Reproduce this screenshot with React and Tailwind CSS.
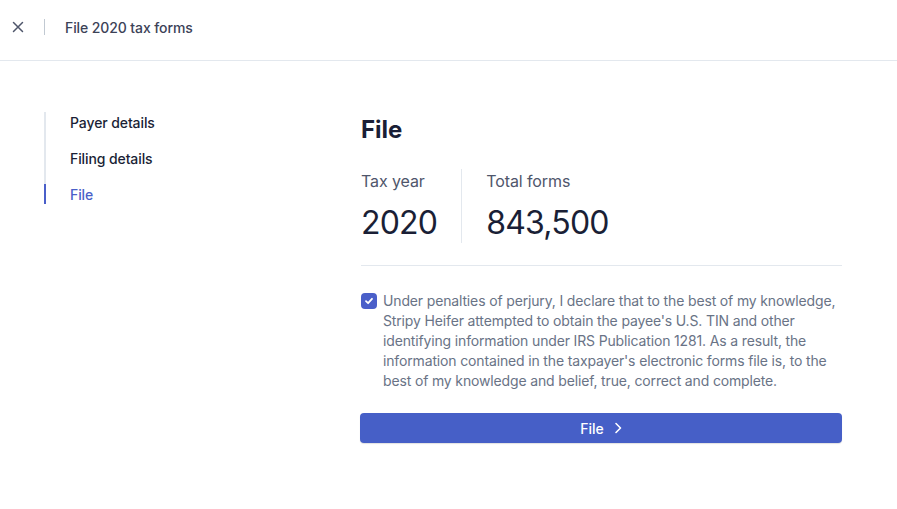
import React from "react";

export default function App() {
  return (
    <div className="min-h-screen w-full bg-white text-[#1a1f36]" style={{ fontFamily: "Inter, 'Noto Sans', sans-serif" }}>
      <header className="h-[61px] border-b border-[#e3e8ee] flex items-center pb-[6px] pl-[12px]">
        <svg width="12" height="12" viewBox="0 0 12 12" fill="none">
          <path d="M1.5 1.5L10.5 10.5M10.5 1.5L1.5 10.5" stroke="#4f566b" strokeWidth="1.5" strokeLinecap="round" />
        </svg>
        <div className="ml-[20px] w-px h-[16px] bg-[#c1c9d2]" />
        <div className="ml-[20px] text-[14px] text-[#3c4257] font-medium tracking-[-0.1px]">File 2020 tax forms</div>
      </header>
      <div className="flex">
        <nav className="w-[361px] shrink-0 pl-[44px] pt-[51px]">
          <div className="flex flex-col gap-[16px] border-l-2 border-[#e3e8ee] tracking-[-0.1px]">
            <div className="h-[20px] flex items-center pl-[24px] text-[14px] font-medium text-[#1a1f36]">Payer details</div>
            <div className="h-[20px] flex items-center pl-[24px] text-[14px] font-medium text-[#1a1f36]">Filing details</div>
            <div className="h-[20px] -ml-[2px] border-l-2 border-[#4a5fc9] flex items-center pl-[24px] text-[14px] font-medium text-[#4a5fc9]">File</div>
          </div>
        </nav>
        <main className="w-[481px] shrink-0 pt-[53px]">
          <h1 className="text-[24px] leading-[32px] font-bold text-[#1a1f36]">File</h1>
          <div className="flex mt-[23px]">
            <div className="pr-[24px] border-r border-[#e3e8ee] flex flex-col">
              <div className="text-[16px] leading-[24px] text-[#4f566b] tracking-[-0.1px]">Tax year</div>
              <div className="text-[32px] leading-[40px] text-[#1a1f36] mt-[10px] tracking-[-0.8px]">2020</div>
            </div>
            <div className="pl-[24px] flex flex-col">
              <div className="text-[16px] leading-[24px] text-[#4f566b] tracking-[-0.1px]">Total forms</div>
              <div className="text-[32px] leading-[40px] text-[#1a1f36] mt-[10px] tracking-[-0.8px]">843,500</div>
            </div>
          </div>
          <div className="mt-[22px] border-t border-[#e3e8ee]" />
          <div className="mt-[25px] flex">
            <div className="mt-[2px] w-[16px] h-[16px] rounded-[4px] bg-[#4a5fc9] flex items-center justify-center shrink-0">
              <svg width="10" height="10" viewBox="0 0 10 10" fill="none">
                <path d="M2 5.2L4.1 7.2L8 2.8" stroke="white" strokeWidth="1.8" strokeLinecap="round" strokeLinejoin="round" />
              </svg>
            </div>
            <p className="ml-[6px] text-[14px] leading-[20px] text-[#697386] tracking-[-0.15px]">
              Under penalties of perjury, I declare that to the best of my knowledge, Stripy Heifer attempted to obtain the payee's U.S. TIN and other identifying information under IRS Publication 1281. As a result, the information contained in the taxpayer's electronic forms file is, to the best of my knowledge and belief, true, correct and complete.
            </p>
          </div>
          <button className="mt-[22px] w-[482px] -ml-[1px] h-[30px] rounded-[4px] bg-[#465fc7] text-white text-[14px] font-medium flex items-center justify-center shadow-[0_1px_1px_rgba(0,0,0,0.12)]">
            <span>File</span>
            <svg className="ml-[10px]" width="8" height="12" viewBox="0 0 8 12" fill="none">
              <path d="M2 1.5L6.5 6L2 10.5" stroke="white" strokeWidth="1.6" strokeLinecap="round" strokeLinejoin="round" />
            </svg>
          </button>
        </main>
      </div>
    </div>
  );
}
